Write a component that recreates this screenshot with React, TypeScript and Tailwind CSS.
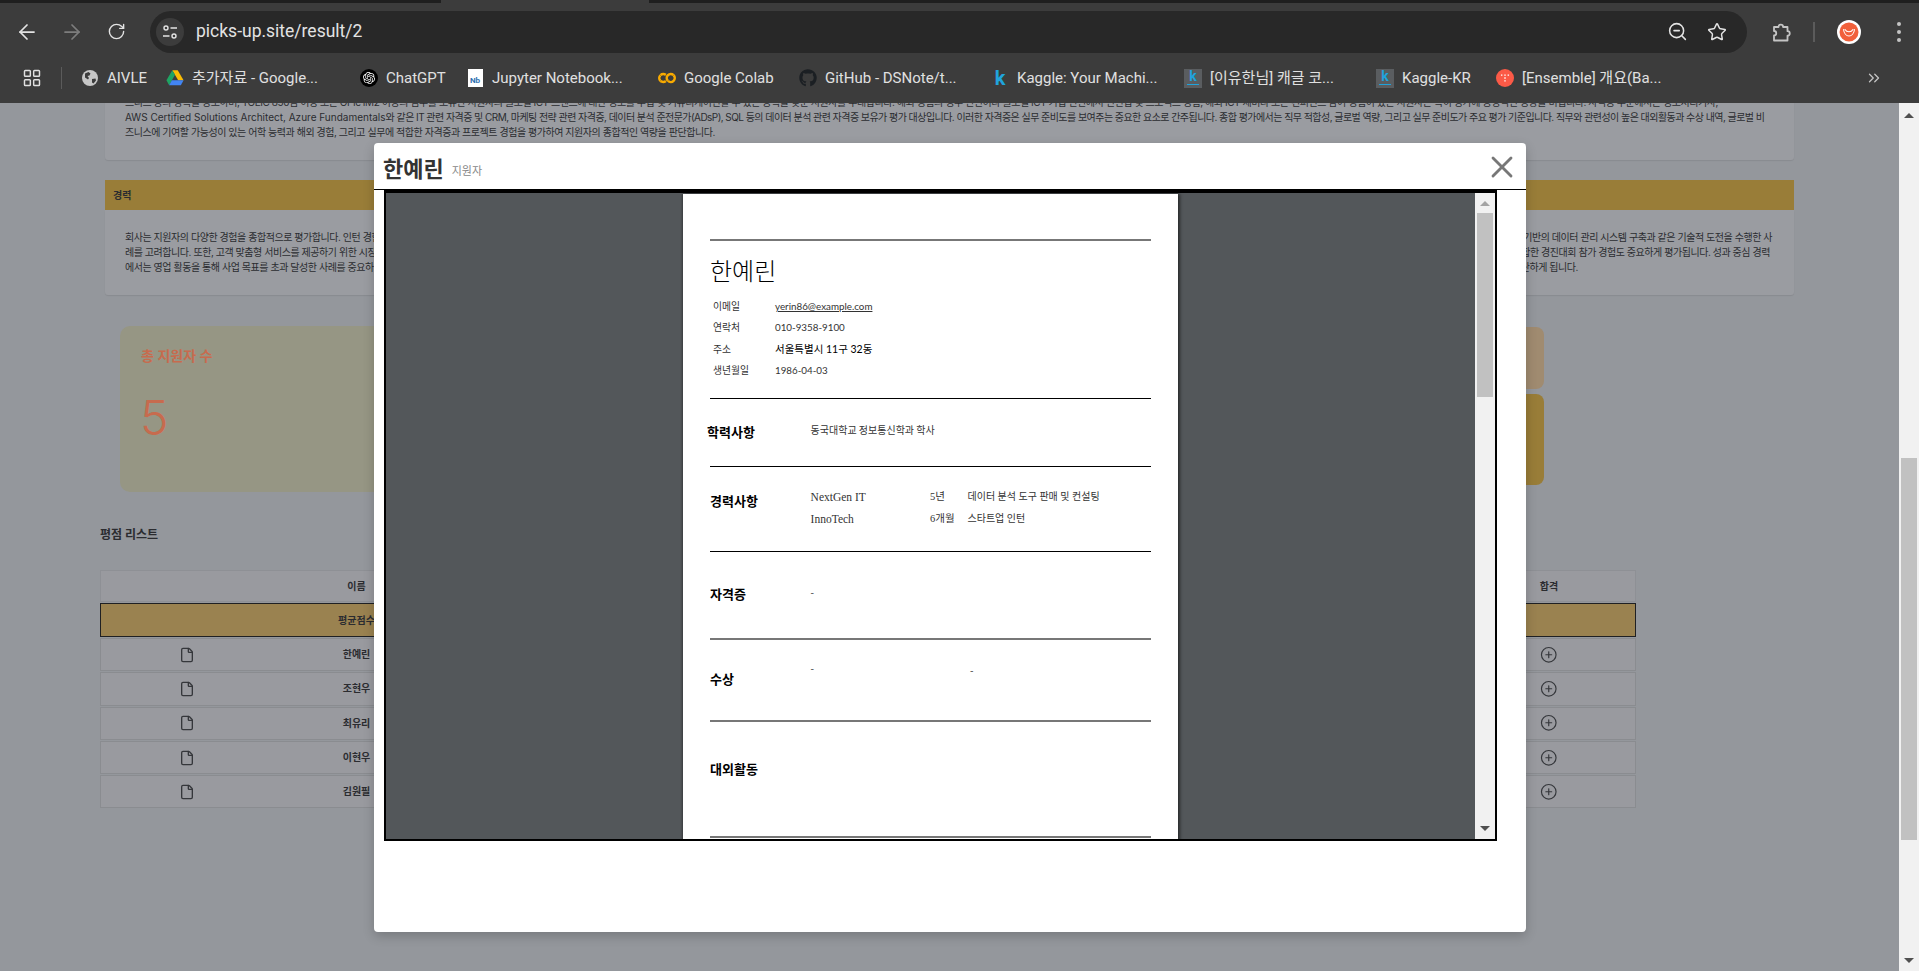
import {
  ArrowLeft,
  ArrowRight,
  ChevronsRight,
  CirclePlus,
  File,
  LayoutGrid,
  RotateCw,
  Star,
  X,
  ZoomOut,
} from "lucide-react";
import { FaGithub } from "react-icons/fa";
import { SiGooglecolab, SiOpenai } from "react-icons/si";

const KR = "font-['Inter','Noto_Sans_CJK_KR',sans-serif]";

const applicants = ["한예린", "조현우", "최유리", "이현우", "김원필"];

function GlobeIcon() {
  return (
    <svg viewBox="0 0 16 16" className="h-4 w-4">
      <circle cx="8" cy="8" r="8" fill="#c7c7c7" />
      <path
        d="M3 3.5 6.5 2l2 1.5-1 2-2 .5 1.5 2-1 1.5L3 7.5zM10 9l3.5-.5.5 2-2.5 3-1.5-1z"
        fill="#3c3c3c"
      />
    </svg>
  );
}

function DriveIcon() {
  return (
    <svg viewBox="0 0 16 16" className="h-[18px] w-[18px]">
      <path d="M5.6 1h4.8l5.2 9h-4.8z" fill="#fbbc04" />
      <path d="M5.6 1 .4 10l2.4 4.5L8 5.2z" fill="#1fa463" />
      <path d="M5.2 10h10.4l-2.4 4.5H2.8z" fill="#4285f4" />
    </svg>
  );
}

function SiteInfoIcon() {
  return (
    <svg viewBox="0 0 16 16" className="h-4 w-4" fill="none" stroke="#e3e3e3" strokeWidth="1.4">
      <circle cx="4" cy="4" r="2" />
      <path d="M8.5 4H15M1 12h6.5" />
      <circle cx="12" cy="12" r="2" />
    </svg>
  );
}

function ExtensionIcon() {
  return (
    <svg
      viewBox="0 0 24 24"
      className="ml-[22px] h-[24px] w-[24px]"
      fill="none"
      stroke="#c4c4c4"
      strokeWidth="1.8"
      strokeLinejoin="round"
    >
      <path d="M5 20.5v-5a2.2 2.2 0 0 0 0-4.5V7h4.5a2.3 2.3 0 0 1 4.6 0H18.5v4.2a2.2 2.2 0 0 1 0 4.5v4.8z" />
    </svg>
  );
}

function AvatarIcon() {
  return (
    <svg viewBox="0 0 24 24" className="ml-[22px] h-6 w-6">
      <circle cx="12" cy="12" r="12" fill="#fff" />
      <circle cx="12" cy="12" r="9.5" fill="#f1603a" />
      <path
        d="M6.5 9.5c.5 4 3 6.5 5.5 6.5s5-2.5 5.5-6.5M8 9.5c1 1.7 2.5 2.3 4 2.3s3-.6 4-2.3"
        fill="none"
        stroke="#fff"
        strokeWidth="1.1"
        strokeLinecap="round"
      />
    </svg>
  );
}

function KebabIcon() {
  return (
    <span className="ml-[36px] flex flex-col gap-[4px]">
      <span className="h-[4px] w-[4px] rounded-full bg-[#c4c4c4]" />
      <span className="h-[4px] w-[4px] rounded-full bg-[#c4c4c4]" />
      <span className="h-[4px] w-[4px] rounded-full bg-[#c4c4c4]" />
    </span>
  );
}

function KaggleKrIcon() {
  return (
    <span className="flex h-[19px] w-[19px] flex-col items-center bg-[#5a5d60] text-[14px] leading-[15px] font-bold text-[#1fa3dc]">
      k
      <span className="h-px w-3 bg-[#1fa3dc]" />
    </span>
  );
}

function NotionIcon() {
  return (
    <svg viewBox="0 0 20 20" className="h-5 w-5">
      <circle cx="10" cy="10" r="10" fill="#fb5a47" />
      <path d="M5.5 6h1.6v1.6H5.5zM9.2 6h1.6v1.6H9.2zM12.9 6h1.6v1.6h-1.6zM9.2 9.2h1.6v1.6H9.2zM9.2 12.4h1.6V14H9.2z" fill="#fff" />
    </svg>
  );
}

const bookmarks = [
  { label: "AIVLE", width: "w-[85px]", icon: <GlobeIcon /> },
  { label: "추가자료 - Google...", width: "w-[194px]", icon: <DriveIcon /> },
  {
    label: "ChatGPT",
    width: "w-[106px]",
    icon: (
      <span className="flex h-[18px] w-[18px] items-center justify-center rounded-full bg-black">
        <SiOpenai className="h-3 w-3 text-white" />
      </span>
    ),
  },
  {
    label: "Jupyter Notebook...",
    width: "w-[192px]",
    icon: (
      <span className="flex h-[18px] w-[15px] items-end justify-center bg-white text-[8px] leading-[12px] font-bold text-[#2f6fb0]">
        Nb
      </span>
    ),
  },
  {
    label: "Google Colab",
    width: "w-[141px]",
    icon: <SiGooglecolab className="h-[18px] w-[18px] text-[#f9ab00]" />,
  },
  {
    label: "GitHub - DSNote/t...",
    width: "w-[192px]",
    icon: <FaGithub className="h-[18px] w-[18px] text-[#1b1f23]" />,
  },
  {
    label: "Kaggle: Your Machi...",
    width: "w-[193px]",
    icon: (
      <span className="w-4 text-center text-[20px] leading-4 font-bold text-[#20a4dc]">k</span>
    ),
  },
  { label: "[이유한님] 캐글 코...", width: "w-[192px]", icon: <KaggleKrIcon /> },
  { label: "Kaggle-KR", width: "w-[120px]", icon: <KaggleKrIcon /> },
  { label: "[Ensemble] 개요(Ba...", width: "w-[190px]", icon: <NotionIcon /> },
];

function BrowserChrome() {
  return (
    <header className="h-[103px] bg-[#3c3c3c] font-['Roboto','Noto_Sans_CJK_KR',sans-serif] text-[#e3e3e3]">
      <div className="flex h-[3px] bg-[#3c3c3c]">
        <div className="w-[441px] bg-[#1f1f1f]" />
        <div className="w-[208px]" />
        <div className="flex-1 bg-[#1f1f1f]" />
      </div>

      <div className="flex h-[52px] items-center pt-[5px]">
        <div className="flex w-[150px] items-center pl-[15px] text-[#e3e3e3]">
          <ArrowLeft className="h-6 w-6" strokeWidth={1.75} />
          <ArrowRight className="ml-[21px] h-6 w-6 text-[#7d7d7d]" strokeWidth={1.75} />
          <RotateCw className="ml-[23px] h-[19px] w-[19px]" strokeWidth={1.75} />
        </div>
        <div className="flex h-[42px] w-[1597px] items-center rounded-full bg-[#282828] pr-[20px] pl-[6px]">
          <span className="flex h-7 w-7 items-center justify-center rounded-full bg-[#3c3c3c]">
            <SiteInfoIcon />
          </span>
          <span className="ml-[12px] text-[17.5px] text-[#e3e3e3]">picks-up.site/result/2</span>
          <ZoomOut className="ml-auto h-[21px] w-[21px]" strokeWidth={1.75} />
          <Star className="ml-[19px] h-5 w-5" strokeWidth={1.75} />
        </div>
        <ExtensionIcon />
        <span className="ml-[20px] h-[20px] w-[2px] bg-[#5b5b5b]" />
        <AvatarIcon />
        <KebabIcon />
      </div>

      <nav className="flex h-[48px] items-center pb-[2px] text-[15px] text-[#e0e0e0]">
        <LayoutGrid className="ml-[22px] h-5 w-5" strokeWidth={1.75} />
        <span className="ml-[19px] h-[22px] w-px bg-[#5b5b5b]" />
        <div className="ml-[19px] flex items-center">
          {bookmarks.map((b) => (
            <div key={b.label} className={`flex items-center gap-2 ${b.width}`}>
              <span className="flex w-[18px] justify-center">{b.icon}</span>
              <span className="whitespace-nowrap">{b.label}</span>
            </div>
          ))}
        </div>
        <ChevronsRight className="mr-[36px] ml-auto h-[18px] w-[18px] text-[#c4c4c4]" strokeWidth={1.75} />
      </nav>
    </header>
  );
}

function DimmedPage() {
  return (
    <div className={`-mt-[8px] ${KR} text-[10px] leading-[15px] tracking-[-0.45px] text-[#2b2c30]`}>
      <div className="ml-[105px] w-[1689px] overflow-hidden rounded-b-[3px] bg-[#9a9ca1] px-[20px] pb-[20px] whitespace-nowrap shadow-[0_1px_1px_rgba(0,0,0,0.08)]">
        <p>
          스니스 등의 항목을 강조하며, TOEIC 850점 이상 또는 OPIc IM2 이상의 점수를 보유한 지원자의 글로벌 ICT 트렌드에 대한 정보를 수집 및 커뮤니케이션할 수 있는 능력을 갖춘 지원자를 우대합니다. 해외 경험의 경우 인턴이나 글로벌 ICT 기업 인턴에서 인턴십 및 프로젝트 경험, 해외 ICT 세미나 또는 컨퍼런스 참여 경험이 있는 지원자는 특히 평가에 긍정적인 영향을 미칩니다. 자격증 부문에서는 정보처리기사,
        </p>
        <p className="tracking-[-0.55px]">
          <span className="tracking-normal">AWS Certified Solutions Architect, Azure Fundamentals</span>와 같은 IT 관련 자격증 및 CRM, 마케팅 전략 관련 자격증, 데이터 분석 준전문가(ADsP), SQL 등의 데이터 분석 관련 자격증 보유가 평가 대상입니다. 이러한 자격증은 실무 준비도를 보여주는 중요한 요소로 간주됩니다. 종합 평가에서는 직무 적합성, 글로벌 역량, 그리고 실무 준비도가 주요 평가 기준입니다. 직무와 관련성이 높은 대외활동과 수상 내역, 글로벌 비
        </p>
        <p>
          즈니스에 기여할 가능성이 있는 어학 능력과 해외 경험, 그리고 실무에 적합한 자격증과 프로젝트 경험을 평가하여 지원자의 종합적인 역량을 판단합니다.
        </p>
      </div>

      <div className="mt-[20px] ml-[105px] flex h-[30px] w-[1689px] items-center bg-[#997d38] px-[8px] font-bold tracking-normal">
        경력
      </div>
      <div className="ml-[105px] w-[1689px] rounded-b-[3px] bg-[#9a9ca1] py-[20px] whitespace-nowrap shadow-[0_1px_1px_rgba(0,0,0,0.08)]">
        <p className="flex justify-between pr-[22px] pl-[20px]">
          <span>회사는 지원자의 다양한 경험을 종합적으로 평가합니다. 인턴 경험</span>
          <span>기반의 데이터 관리 시스템 구축과 같은 기술적 도전을 수행한 사</span>
        </p>
        <p className="flex justify-between pr-[24px] pl-[20px]">
          <span>례를 고려합니다. 또한, 고객 맞춤형 서비스를 제공하기 위한 시장</span>
          <span>합한 경진대회 참가 경험도 중요하게 평가됩니다. 성과 중심 경력</span>
        </p>
        <p className="flex justify-between pr-[216px] pl-[20px]">
          <span>에서는 영업 활동을 통해 사업 목표를 초과 달성한 사례를 중요하게</span>
          <span>판단하게 됩니다.</span>
        </p>
      </div>

      <div className="mt-[31px] ml-[120px] flex w-[1424px] gap-[15px] tracking-normal">
        <div className="h-[166px] w-[900px] rounded-[10px] bg-[#969684] pt-[20px] pl-[21px] text-[#c76b4e]">
          <p className="text-[14px] leading-[20px] font-semibold">총 지원자 수</p>
          <p className="mt-[22px] -ml-px text-[48px] leading-[60px] font-light">5</p>
        </div>
        <div className="flex flex-1 flex-col gap-[5px] pt-px">
          <div className="h-[62px] rounded-[8px] bg-[#a08b70]" />
          <div className="h-[91px] rounded-[8px] bg-[#997d38]" />
        </div>
      </div>

      <h2 className="mt-[35px] ml-[100px] text-[12px] leading-[16px] font-bold tracking-normal">평점 리스트</h2>

      <div className="mt-[27px] ml-[100px] w-[1536px] text-center font-bold tracking-normal">
        <div className="grid h-[32px] grid-cols-[172px_167px_1fr_172px] items-center border border-[#8e9095] bg-[#999a9f]">
          <span />
          <span>이름</span>
          <span />
          <span>합격</span>
        </div>
        <div className="mt-px grid h-[34px] grid-cols-[172px_167px_1fr_172px] items-center border border-[#1f2023] bg-[#9a8250]">
          <span />
          <span className="whitespace-nowrap">평균점수</span>
          <span />
          <span />
        </div>
        {applicants.map((name) => (
          <div
            key={name}
            className="mt-px grid h-[33.3px] grid-cols-[172px_167px_1fr_172px] items-center border border-[#8a8c90] bg-[#999a9f]"
          >
            <File className="mx-auto h-4 w-4 text-[#35373b]" strokeWidth={2} />
            <span>{name}</span>
            <span />
            <CirclePlus className="mx-auto h-[17.5px] w-[17.5px] text-[#35373b]" strokeWidth={1.6} />
          </div>
        ))}
      </div>
    </div>
  );
}

function Rule({ dark }: { dark?: boolean }) {
  return dark ? <div className="h-px bg-black" /> : <div className="h-[2px] bg-[#777]" />;
}

function Heading({ children, className = "" }: { children: string; className?: string }) {
  return <h3 className={`text-[13px] leading-[18px] font-semibold text-black ${className}`}>{children}</h3>;
}

function ResumePage() {
  return (
    <div className="mx-auto h-[700px] w-[495px] bg-white px-[27px] pt-[45px] font-['Noto_Sans_CJK_KR',sans-serif] text-[10px] leading-[14px] text-[#333] shadow-[2px_0_3px_rgba(0,0,0,0.5),-1px_0_2px_rgba(0,0,0,0.3)]">
      <Rule />
      <div className="h-[157px] pt-[14px]">
        <h1 className="text-[24px] leading-[30px] font-light text-black">한예린</h1>
        <dl className="mt-[11px] grid grid-cols-[62px_1fr] pl-[3px] font-['Lato','Noto_Sans_CJK_KR',sans-serif] text-[9.8px]">
          <dt className="leading-[21.3px]">이메일</dt>
          <dd className="leading-[21.3px] underline">yerin86@example.com</dd>
          <dt className="leading-[21.3px]">연락처</dt>
          <dd className="leading-[21.3px]">010-9358-9100</dd>
          <dt className="leading-[21.3px]">주소</dt>
          <dd className="text-[10.5px] leading-[21.3px] text-black">서울특별시 11구 32동</dd>
          <dt className="leading-[21.3px]">생년월일</dt>
          <dd className="leading-[21.3px]">1986-04-03</dd>
        </dl>
      </div>
      <Rule dark />
      <div className="flex h-[67px] pt-[24px]">
        <Heading className="-ml-[3px] w-[103.6px]">학력사항</Heading>
        <p>동국대학교 정보통신학과 학사</p>
      </div>
      <Rule dark />
      <div className="flex h-[84px] items-start pt-[25px]">
        <Heading className="w-[100.6px]">경력사항</Heading>
        <div className="-mt-[2px] grid grid-cols-[119.4px_37.5px_1fr] gap-y-[8px] font-['Liberation_Serif','Noto_Sans_CJK_KR',serif] text-[11.5px]">
          <span>NextGen IT</span>
          <span className="text-[10.5px]">5년</span>
          <span className="text-[10px]">데이터 분석 도구 판매 및 컨설팅</span>
          <span>InnoTech</span>
          <span className="text-[10.5px]">6개월</span>
          <span className="text-[10px]">스타트업 인턴</span>
        </div>
      </div>
      <Rule dark />
      <div className="flex h-[86px] pt-[33px]">
        <Heading className="w-[100.6px]">자격증</Heading>
        <span>-</span>
      </div>
      <Rule />
      <div className="flex h-[80px] pt-[30px]">
        <Heading className="w-[100.6px]">수상</Heading>
        <div className="-mt-[9px] flex w-[163px] justify-between">
          <span>-</span>
          <span className="mt-[2px]">-</span>
        </div>
      </div>
      <Rule />
      <div className="h-[114px] pt-[38px]">
        <Heading>대외활동</Heading>
      </div>
      <Rule />
    </div>
  );
}

function ApplicantModal() {
  return (
    <div className="absolute top-[40px] left-[374px] h-[789px] w-[1152px] rounded-[4px] bg-white shadow-[0_4px_12px_rgba(0,0,0,0.2)]">
      <div className="flex h-[47px] items-center border-b border-black pr-[6px] pl-[9px] font-['Noto_Sans_CJK_KR',sans-serif]">
        <span className="mt-px text-[22px] leading-none font-bold text-[#333]">한예린</span>
        <span className="mt-[9px] ml-[8px] text-[11px] leading-none text-[#888]">지원자</span>
        <X className="mt-[1px] ml-auto h-9 w-9 text-[#777]" strokeWidth={1.9} />
      </div>
      <div className="ml-[10px] flex h-[651px] w-[1113px] overflow-hidden border-2 border-t-[3px] border-black bg-[#53575a]">
        <div className="h-full flex-1 overflow-hidden pt-[1px]">
          <ResumePage />
        </div>
        <div className="flex w-[20px] flex-col items-center bg-[#f1f1f1] px-[2px]">
          <span className="mt-[8px] h-0 w-0 border-x-[5px] border-b-[5px] border-x-transparent border-b-[#a3a3a3]" />
          <span className="mt-[7px] h-[184px] w-full bg-[#c1c1c1]" />
          <span className="mt-auto mb-[8px] h-0 w-0 border-x-[5px] border-t-[5px] border-x-transparent border-t-[#505050]" />
        </div>
      </div>
    </div>
  );
}

function PageScrollbar() {
  return (
    <div className="absolute inset-y-0 right-0 flex w-[20px] flex-col items-center bg-[#f1f1f1] px-[2px]">
      <span className="mt-[10px] h-0 w-0 border-x-[5px] border-b-[5px] border-x-transparent border-b-[#505050]" />
      <span className="mt-[340px] h-[382px] w-full bg-[#c1c1c1]" />
      <span className="mt-auto mb-[8px] h-0 w-0 border-x-[5px] border-t-[5px] border-x-transparent border-t-[#505050]" />
    </div>
  );
}

export default function App() {
  return (
    <div className="h-[971px] w-[1919px] overflow-hidden bg-[#94979c]">
      <div className="relative z-10">
        <BrowserChrome />
      </div>
      <main className="relative h-[868px] overflow-hidden">
        <DimmedPage />
        <ApplicantModal />
        <PageScrollbar />
      </main>
    </div>
  );
}
